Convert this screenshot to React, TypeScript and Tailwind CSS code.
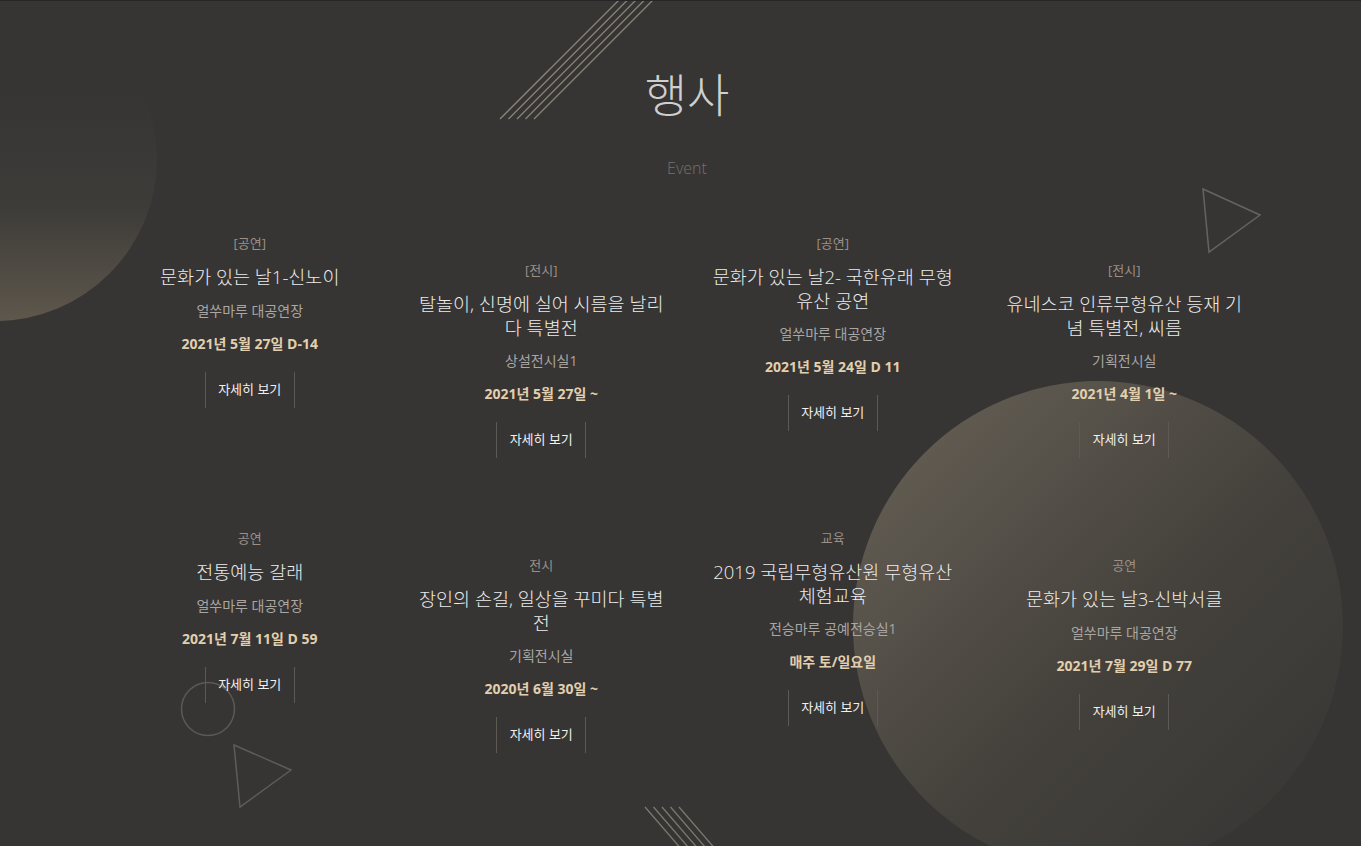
import React from 'react';

interface EventItem {
  category: string;
  title: string;
  place: string;
  date: string;
}

const events: EventItem[] = [
  { category: '[공연]', title: '문화가 있는 날1-신노이', place: '얼쑤마루 대공연장', date: '2021년 5월 27일 D-14' },
  { category: '[전시]', title: '탈놀이, 신명에 실어 시름을 날리다 특별전', place: '상설전시실1', date: '2021년 5월 27일 ~' },
  { category: '[공연]', title: '문화가 있는 날2- 국한유래 무형유산 공연', place: '얼쑤마루 대공연장', date: '2021년 5월 24일 D 11' },
  { category: '[전시]', title: '유네스코 인류무형유산 등재 기념 특별전, 씨름', place: '기획전시실', date: '2021년 4월 1일 ~' },
  { category: '공연', title: '전통예능 갈래', place: '얼쑤마루 대공연장', date: '2021년 7월 11일 D 59' },
  { category: '전시', title: '장인의 손길, 일상을 꾸미다 특별전', place: '기획전시실', date: '2020년 6월 30일 ~' },
  { category: '교육', title: '2019 국립무형유산원 무형유산 체험교육', place: '전승마루 공예전승실1', date: '매주 토/일요일' },
  { category: '공연', title: '문화가 있는 날3-신박서클', place: '얼쑤마루 대공연장', date: '2021년 7월 29일 D 77' },
];

const font = 'font-["Open_Sans","Noto_Sans_CJK_KR",sans-serif]';

const EventCard: React.FC<{ item: EventItem; shifted: boolean }> = ({ item, shifted }) => (
  <div className={`flex flex-col items-center text-center ${shifted ? 'mt-[27px]' : ''}`}>
    <p className="text-[13px] leading-5 text-[#9b9088]">{item.category}</p>
    <h3 className="mt-[12px] w-[252px] text-[18.5px] leading-[23.5px] font-light text-[#ececec]">{item.title}</h3>
    <p className="mt-[12px] text-[14px] leading-5 text-[#a9a6a3]">{item.place}</p>
    <p className="mt-[13px] text-[14px] leading-5 font-bold text-[#e2cfae]">{item.date}</p>
    <button
      type="button"
      className="mt-[18px] h-9 w-[90px] border-x border-[#5d5955] text-[13px] text-[#f0f0f0]"
    >
      자세히 보기
    </button>
  </div>
);

export default function App() {
  return (
    <div className={`relative h-[846px] w-full overflow-hidden border-t border-[#262626] bg-[#363534] ${font}`}>
      {/* background decorations */}
      <div className="absolute left-[-167px] top-[-4px] h-[324px] w-[324px] rounded-full bg-gradient-to-b from-[#363534] from-30% via-[#3e3c39] via-65% to-[#5e574c]" />
      <div className="absolute left-[853px] top-[380px] h-[490px] w-[490px] rounded-full bg-gradient-to-br from-[#6a6358] via-[#44413c] via-55% to-[#363534]" />
      <svg className="absolute left-0 top-0" width="1361" height="846" fill="none">
        <g stroke="#8a8378" strokeWidth="1.3">
          <line x1="500" y1="118" x2="622" y2="-4" />
          <line x1="508.5" y1="118" x2="630.5" y2="-4" />
          <line x1="517" y1="118" x2="639" y2="-4" />
          <line x1="525.5" y1="118" x2="647.5" y2="-4" />
          <line x1="534" y1="118" x2="656" y2="-4" />
        </g>
        <g stroke="#7d776e" strokeWidth="1.3">
          <line x1="645" y1="806" x2="683" y2="850" />
          <line x1="653.5" y1="806" x2="691.5" y2="850" />
          <line x1="662" y1="806" x2="700" y2="850" />
          <line x1="670.5" y1="806" x2="708.5" y2="850" />
          <line x1="679" y1="806" x2="717" y2="850" />
        </g>
        <polygon points="1203,188 1260,214 1209,251" stroke="#67635c" strokeWidth="1.5" />
        <circle cx="208" cy="708" r="26.5" stroke="#5c5955" strokeWidth="1.5" />
        <polygon points="234,744 291,769 240,806" stroke="#5f5c57" strokeWidth="1.5" />
      </svg>

      <div className="relative ml-[104px] w-[1166px]">
        <header className="flex flex-col items-center">
          <h2 className="mt-[66px] text-[46px] leading-[54px] font-light text-[#cfcfcf]">행사</h2>
          <p className="mt-[35px] text-[16px] leading-6 font-light text-[#7a6f68]">Event</p>
        </header>

        <div className="mt-[53px] grid grid-cols-4 gap-y-[70px]">
          {events.map((item, i) => (
            <EventCard key={i} item={item} shifted={i % 2 === 1} />
          ))}
        </div>
      </div>
    </div>
  );
}
